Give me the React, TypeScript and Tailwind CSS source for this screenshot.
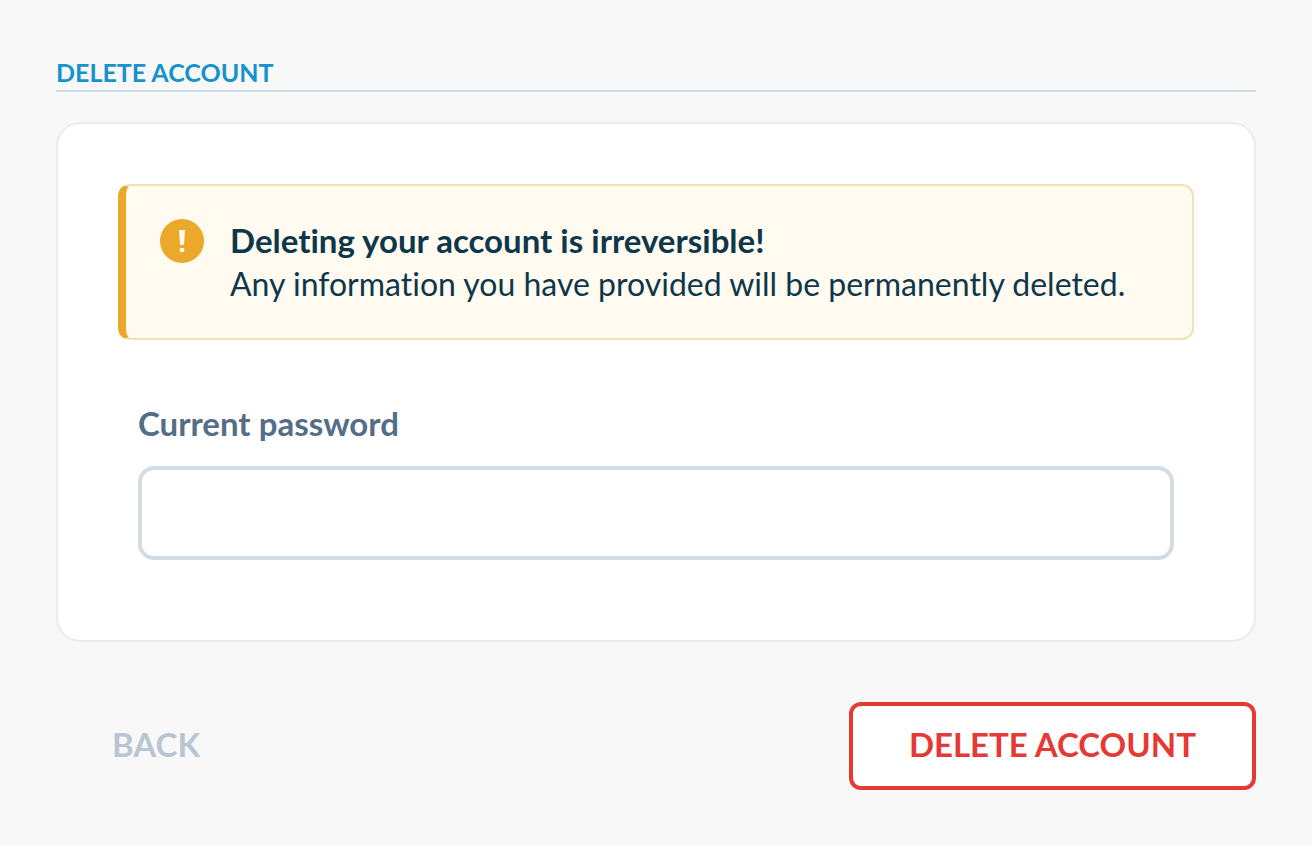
import { useState } from "react";

function Warning({ title, text }: { title: string; text: string }) {
  return (
    <div
      role="alert"
      className="flex gap-[26px] rounded-xl border-2 border-l-8 border-[#f2e1b2] border-l-[#eba82b] bg-[#fffbf0] py-8 pl-[34px] pr-8"
    >
      <svg viewBox="0 0 44 44" className="mt-px h-11 w-11 shrink-0" aria-hidden="true">
        <circle cx="22" cy="22" r="22" fill="#eba82b" />
        <path d="M19 11h6l-1 15h-4z" fill="#fffbf0" />
        <rect x="19.8" y="29" width="4.4" height="4" rx="0.8" fill="#fffbf0" />
      </svg>
      <div className="leading-[44px] text-[#0f374b]">
        <p className="text-[33px] font-bold">{title}</p>
        <p className="text-[32px]">{text}</p>
      </div>
    </div>
  );
}

export default function App() {
  const [password, setPassword] = useState("");

  return (
    <main className="min-h-screen bg-[#f8f8f8] p-14 font-['Lato',sans-serif] [font-variant-ligatures:none]">
      <form onSubmit={(e) => e.preventDefault()}>
        <h1 className="border-b-2 border-[#d0dae3] pb-0.5 text-[25px] font-bold leading-8 text-[#1792ca]">
          DELETE ACCOUNT
        </h1>
        <section className="mt-[30px] rounded-3xl border-2 border-[#e8ecef] bg-white px-[60px] pt-[60px] pb-20">
          <Warning
            title="Deleting your account is irreversible!"
            text="Any information you have provided will be permanently deleted."
          />
          <div className="mt-[60px] flex flex-col gap-5 px-5">
            <label htmlFor="password" className="text-[33px] font-bold leading-[46px] text-[#546e87]">
              Current password
            </label>
            <input
              id="password"
              type="password"
              value={password}
              onChange={(e) => setPassword(e.target.value)}
              className="h-[94px] w-full rounded-2xl border-4 border-[#d3dce3] bg-white px-6 text-[32px] outline-none"
            />
          </div>
        </section>
        <div className="mt-[60px] flex items-center justify-between">
          <button type="button" className="h-[88px] px-14 pb-0.5 text-[33px] font-bold text-[#b8c5d3]">
            BACK
          </button>
          <button
            type="submit"
            className="h-[88px] rounded-xl border-4 border-[#e53935] bg-white px-14 pb-0.5 text-[33px] font-bold text-[#e53935]"
          >
            DELETE ACCOUNT
          </button>
        </div>
      </form>
    </main>
  );
}
